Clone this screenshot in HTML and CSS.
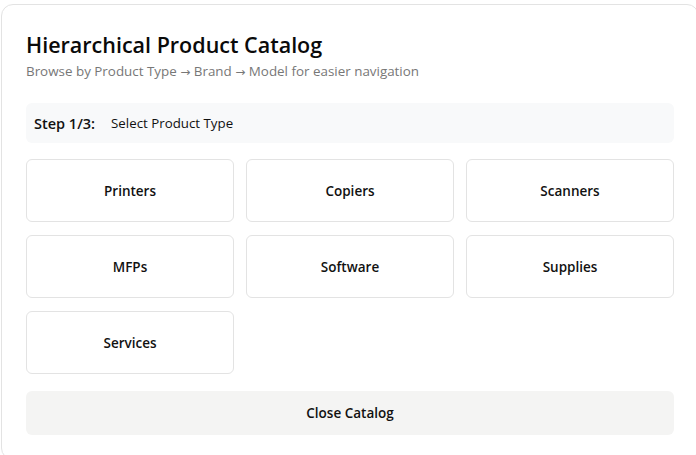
FILE: index.html
```html
<!DOCTYPE html>
<html>
<head>
<meta charset="utf-8">
<link rel="stylesheet" href="styles.css">
</head>
<body>
<div class="stage">
  <div class="panel">
    <header class="head">
      <h1 class="title">Hierarchical Product Catalog</h1>
      <p class="subtitle">Browse by Product Type <span class="arrow">→</span> Brand <span class="arrow">→</span> Model for easier navigation</p>
    </header>
    <div class="step">
      <span class="step-label">Step 1/3:</span>
      <span class="step-text">Select Product Type</span>
    </div>
    <div class="grid">
      <button class="card">Printers</button>
      <button class="card">Copiers</button>
      <button class="card">Scanners</button>
      <button class="card">MFPs</button>
      <button class="card">Software</button>
      <button class="card">Supplies</button>
      <button class="card">Services</button>
    </div>
    <button class="close">Close Catalog</button>
  </div>
</div>
</body>
</html>
```

FILE: styles.css
```css
html, body {
  margin: 0;
  padding: 0;
  background: #ffffff;
  overflow: hidden;
}
body {
  font-family: "Open Sans", "Noto Sans", sans-serif;
  color: #111111;
}
.stage {
  padding: 4px 0 0 1px;
  width: 700px;
}
.panel {
  width: 648px;
  border: 1px solid #e3e3e3;
  border-radius: 12px;
  padding: 24px 24px 24px 24px;
  background: #fff;
}
.head {
  margin-bottom: 21px;
}
.title {
  margin: 0;
  font-size: 21.5px;
  line-height: 31px;
  font-weight: 600;
  color: #0a0a0a;
}
.subtitle {
  margin: 1px 0 0;
  font-size: 13.4px;
  line-height: 20px;
  color: #777777;
}
.arrow {
  font-family: "DejaVu Sans", sans-serif;
  font-size: 12px;
}
.step {
  display: flex;
  align-items: center;
  height: 40px;
  padding: 0 8px;
  background: #f8f9fa;
  border-radius: 6px;
  gap: 16px;
}
.step-label {
  font-size: 14.5px;
  font-weight: 600;
}
.step-text {
  font-size: 13.3px;
}
.grid {
  display: grid;
  grid-template-columns: repeat(3, 1fr);
  gap: 13px 12px;
  margin-top: 16px;
}
.card {
  height: 63px;
  border: 1px solid #e3e3e3;
  border-radius: 6px;
  background: #fff;
  font-family: inherit;
  font-size: 13.5px;
  font-weight: 600;
  color: #111;
}
.close {
  display: block;
  width: 100%;
  height: 44px;
  margin-top: 17px;
  border: none;
  border-radius: 6px;
  background: #f4f4f3;
  font-family: inherit;
  font-size: 13.5px;
  font-weight: 600;
  color: #111;
}
```
